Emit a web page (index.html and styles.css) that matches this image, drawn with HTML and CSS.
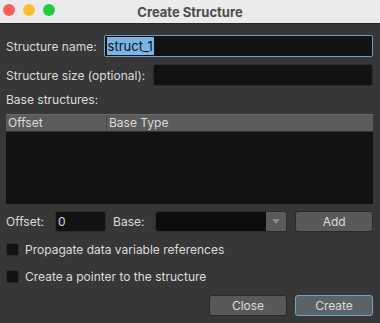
FILE: index.html
```html
<!DOCTYPE html>
<html lang="en">
<head>
  <meta charset="UTF-8">
  <meta name="viewport" content="width=device-width, initial-scale=1.0">
  <title>Create Structure</title>
  <link rel="stylesheet" href="styles.css">
</head>
<body>
  <div class="window">
    <div class="titlebar">
      <div class="lights">
        <span class="light red"></span>
        <span class="light yellow"></span>
        <span class="light green"></span>
      </div>
      <div class="title">Create Structure</div>
    </div>
    <div class="content">
      <div class="row row-name">
        <label class="label">Structure name:</label>
        <div class="field focused"><span class="selected">struct_1</span></div>
      </div>
      <div class="row row-size">
        <label class="label">Structure size (optional):</label>
        <div class="field"></div>
      </div>
      <div class="section-label">Base structures:</div>
      <div class="table">
        <div class="table-head">
          <div class="col col-offset">Offset</div>
          <div class="col col-type">Base Type</div>
        </div>
        <div class="table-body"></div>
      </div>
      <div class="row row-add">
        <label class="label">Offset:</label>
        <div class="field small">0</div>
        <label class="label base-label">Base:</label>
        <div class="combo">
          <div class="combo-text"></div>
          <div class="combo-arrow">
            <svg width="8" height="5" viewBox="0 0 8 5"><path d="M0 0 L8 0 L4 5 Z" fill="#8a8a8a"/></svg>
          </div>
        </div>
        <button class="btn add">Add</button>
      </div>
      <div class="check">
        <span class="box"></span>
        <span>Propagate data variable references</span>
      </div>
      <div class="check">
        <span class="box"></span>
        <span>Create a pointer to the structure</span>
      </div>
      <div class="actions">
        <button class="btn">Close</button>
        <button class="btn primary">Create</button>
      </div>
    </div>
  </div>
</body>
</html>
```
FILE: styles.css
```css
body {
  margin: 0;
  font-family: Inter, "Noto Sans", sans-serif;
  font-size: 12px;
  background: #373737;
}
.window {
  width: 380px;
  height: 323px;
  background: #373737;
  color: #dcdcdc;
}
.titlebar {
  position: relative;
  height: 23px;
  background: #ebebeb;
  border-bottom: 1px solid #262626;
  display: flex;
  align-items: center;
  justify-content: center;
}
.lights {
  position: absolute;
  left: 3px;
  top: 4px;
  display: flex;
  gap: 8px;
}
.light {
  width: 12px;
  height: 12px;
  border-radius: 50%;
}
.red { background: #fe5f57; }
.yellow { background: #febc2e; }
.green { background: #28c840; }
.title {
  font-weight: bold;
  color: #4d4d4d;
  font-size: 13px;
  padding-top: 1px;
}
.content {
  padding: 11px 7px 0 6px;
  display: flex;
  flex-direction: column;
}
.row {
  display: flex;
  align-items: center;
  height: 22px;
}
.label {
  white-space: nowrap;
}
.field {
  flex: 1;
  height: 20px;
  background: #121212;
  border: 1px solid #2c2c2c;
  border-radius: 3px;
  line-height: 20px;
  padding-left: 3px;
  color: #dcdcdc;
}
.row-name .field {
  margin-left: 7px;
}
.field.focused {
  border-color: #6d9ec2;
  padding-left: 2px;
  border-radius: 2px;
  height: 20px;
}
.selected {
  background: #7cb4e4;
  color: #111;
  padding: 1px 1px;
  font-size: 13px;
}
.row-size {
  margin-top: 7px;
}
.row-size .field {
  margin-left: 8px;
}
.section-label {
  margin-top: 6px;
  height: 16px;
  line-height: 16px;
}
.table {
  margin-top: 6px;
  height: 90px;
  background: #121212;
  display: flex;
  flex-direction: column;
}
.table-head {
  display: flex;
  height: 18px;
  background: #5b5b5b;
  border-top: 1px solid #686868;
  border-bottom: 1px solid #333;
  box-sizing: border-box;
  line-height: 16px;
}
.col {
  padding-left: 2px;
}
.col-offset {
  width: 98px;
  border-right: 1px solid #4a4a4a;
}
.col-type {
  padding-left: 2px;
}
.row-add {
  margin-top: 7px;
  height: 21px;
}
.field.small {
  flex: none;
  width: 47px;
  height: 19px;
  line-height: 19px;
  margin-left: 11px;
  padding-left: 2px;
}
.base-label {
  margin-left: 7px;
}
.combo {
  width: 132px;
  height: 21px;
  margin-left: 11px;
  display: flex;
  border: 1px solid #2c2c2c;
  border-radius: 3px;
  box-sizing: border-box;
  overflow: hidden;
}
.combo-text {
  flex: 1;
  background: #0d0d0d;
}
.combo-arrow {
  width: 20px;
  background: #5a5a5a;
  display: flex;
  align-items: center;
  justify-content: center;
}
.btn {
  font-family: inherit;
  font-size: 12px;
  color: #dcdcdc;
  background: #595959;
  border: 1px solid #2a2a2a;
  border-radius: 3px;
  width: 78px;
  height: 21px;
  padding: 0;
}
.add {
  flex: 1;
  margin-left: 8px;
}
.check {
  display: flex;
  align-items: center;
  gap: 6px;
  height: 14px;
}
.row-add + .check {
  margin-top: 10px;
}
.check + .check {
  margin-top: 13px;
}
.box {
  width: 11px;
  height: 11px;
  background: #121212;
  border: 1px solid #2c2c2c;
  border-radius: 2px;
}
.actions {
  display: flex;
  justify-content: flex-end;
  gap: 8px;
  margin-top: 12px;
}
.primary {
  background: #5a6467;
  border-color: #6fa6c9;
}
```
